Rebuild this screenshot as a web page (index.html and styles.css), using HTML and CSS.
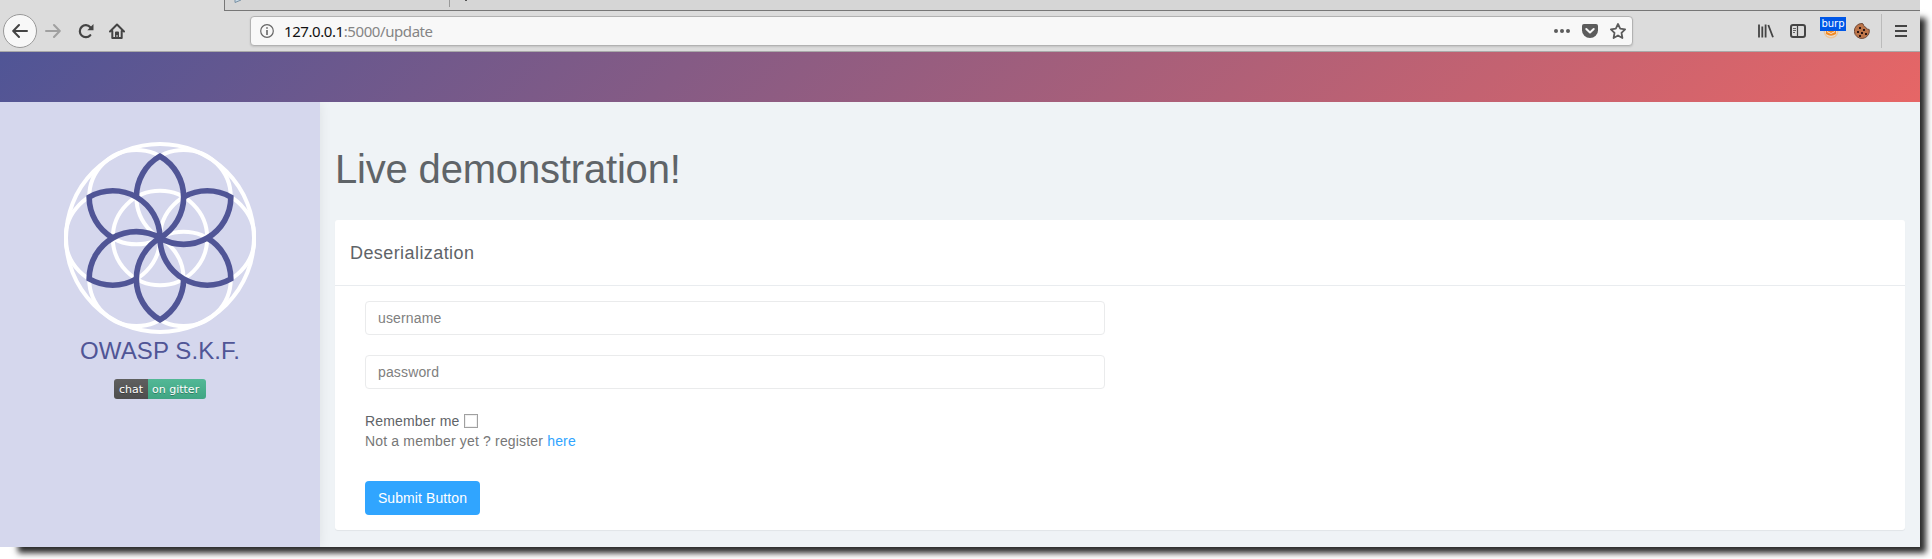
FILE: index.html
```html
<!DOCTYPE html>
<html lang="en">
<head>
<meta charset="utf-8">
<title>Live demonstration</title>
<link rel="stylesheet" href="styles.css">
</head>
<body>
<div class="window">
  <div class="tabstrip">
    <div class="tabs">
      <svg class="tab-icon" width="9" height="3" viewBox="0 0 9 3"><path d="M1 0v2.500L7 0" fill="#c9dbe8" stroke="#7890a3"/></svg>
      <span class="tab-sep"></span>
      <span class="tab-plus"></span>
    </div>
  </div>
  <div class="toolbar">
    <div class="nav">
      <span class="back"><svg width="16" height="16" viewBox="0 0 16 16" class="line"><path d="M15 8H1.500M7 2L1.200 8L7 14"/></svg></span>
      <svg width="16" height="16" viewBox="0 0 16 16" class="line forward"><path d="M1 8h13.500M9 2l5.800 6L9 14"/></svg>
      <svg width="16" height="16" viewBox="0 0 16 16" class="reload"><path d="M12.300 12.200A6 6 0 1 1 12.300 4.200" fill="none" stroke="#444" stroke-width="2.200" stroke-linecap="round"/><path d="M15.500 1v6.200H9.300z" fill="#444"/></svg>
      <svg width="16" height="16" viewBox="0 0 16 16" class="home"><path d="M1 8.500L8 1.500L15 8.500M3.300 8v6.900h9.400V8" fill="none" stroke="#444" stroke-width="2" stroke-linecap="round" stroke-linejoin="round"/><path d="M6 15V9.500q0-1 1-1h2q1 0 1 1V15H8.500v-3h-1v3z" fill="#444"/></svg>
    </div>
    <div class="urlbar">
      <svg width="14" height="14" viewBox="0 0 14 14"><circle cx="7" cy="7" r="6.300" fill="none" stroke="#666" stroke-width="1.200"/><path d="M6.200 6h1.600v5H6.200zM6.200 3.200h1.600v1.600H6.200z" fill="#666"/></svg>
      <span class="url"><b>127.0.0.1</b>:5000/update</span>
      <div class="page-actions">
        <svg width="16" height="16" viewBox="0 0 16 16" fill="#5c5c5c"><circle cx="2" cy="8" r="2"/><circle cx="8" cy="8" r="2"/><circle cx="14" cy="8" r="2"/></svg>
        <svg width="16" height="16" viewBox="0 0 16 16"><path d="M2 1h12q2 0 2 2v4.500a8 7.500 0 0 1-16 0V3q0-2 2-2z" fill="#5c5c5c"/><path d="M4.300 6L8 9.500L11.700 6" fill="none" stroke="#f8f8f8" stroke-width="2" stroke-linecap="round" stroke-linejoin="round"/></svg>
        <svg width="16" height="16" viewBox="0 0 16 16"><path d="M8 1l2.200 4.600 4.900.7-3.600 3.500.9 5.200L8 12.500 3.600 15l.9-5.200L.9 6.300l4.900-.7z" fill="none" stroke="#5c5c5c" stroke-width="1.800" stroke-linejoin="round"/></svg>
      </div>
    </div>
    <div class="tools">
      <svg width="16" height="16" viewBox="0 0 16 16" class="library"><path d="M1 1.500v13M4.300 3.500v11M7.600 1.500v13M10.300 2L15 14.300" fill="none" stroke="#444" stroke-width="1.800"/></svg>
      <svg width="16" height="16" viewBox="0 0 16 16" class="sidebar-icon"><rect x="1" y="2" width="14" height="12" rx="2" fill="none" stroke="#444" stroke-width="2"/><path d="M7.500 2v12" stroke="#444" stroke-width="1.200"/><path d="M3 5.500h3M3 7.500h3M3 9.500h2" stroke="#555" stroke-width=".9"/></svg>
      <span class="burp"><svg width="16" height="16" viewBox="0 0 16 16"><circle cx="8" cy="8" r="7.500" fill="#eec79b"/><circle cx="8" cy="8" r="6" fill="#e8e1da"/><path d="M3 8h10v3q-5 3.500-10 0z" fill="#f28a24"/><path d="M4 8.500l4 2 4-2" fill="none" stroke="#f6e6d4"/></svg><span class="burp-label">burp</span></span>
      <svg width="16" height="16" viewBox="0 0 16 16" class="cookie"><path d="M8 .5q1.300 0 1.500 1.700Q10 4 11.500 4q.5 2.500 3.700 2.500A7.500 7.500 0 1 1 8 .5z" fill="#bd7549" stroke="#714a38"/><path d="M5 4h2v2H5zM9 6h2v2H9zM3 8h2v2H3zM7 9h2v2H7zM11 10h2v2h-2zM5 12h2v2H5z" fill="#2e1714"/></svg>
      <span class="tool-sep"></span>
      <svg width="12" height="12" viewBox="0 0 12 12" class="menu"><path d="M0 1h12M0 6h12M0 11h12" stroke="#444" stroke-width="2"/></svg>
    </div>
  </div>
  <div class="banner"></div>
  <div class="page">
    <aside class="sidebar">
      <svg class="logo" width="192" height="192" viewBox="-96 -96 192 192" fill="none">
        <g stroke="#fff" stroke-width="4">
          <circle r="94"/><circle r="47.200"/>
          <circle cx="47.200" r="47.200"/><circle cx="-47.200" r="47.200"/>
          <circle cx="23.600" cy="-40.900" r="47.200"/><circle cx="-23.600" cy="-40.900" r="47.200"/>
          <circle cx="23.600" cy="40.900" r="47.200"/><circle cx="-23.600" cy="40.900" r="47.200"/>
        </g>
        <g class="petals">
          <path d="M-23.600 -40.900A47.200 47.200 0 0 1 0 -81.800A47.200 47.200 0 0 1 0 0"/>
          <path transform="rotate(60)" d="M-23.600 -40.900A47.200 47.200 0 0 1 0 -81.800A47.200 47.200 0 0 1 0 0"/>
          <path transform="rotate(120)" d="M-23.600 -40.900A47.200 47.200 0 0 1 0 -81.800A47.200 47.200 0 0 1 0 0"/>
          <path transform="rotate(180)" d="M-23.600 -40.900A47.200 47.200 0 0 1 0 -81.800A47.200 47.200 0 0 1 0 0"/>
          <path transform="rotate(240)" d="M-23.600 -40.900A47.200 47.200 0 0 1 0 -81.800A47.200 47.200 0 0 1 0 0"/>
          <path transform="rotate(300)" d="M-23.600 -40.900A47.200 47.200 0 0 1 0 -81.800A47.200 47.200 0 0 1 0 0"/>
        </g>
      </svg>
      <div class="brand">OWASP S.K.F.</div>
      <div class="badge"><span class="badge-left">chat</span><span class="badge-right">on gitter</span></div>
    </aside>
    <main class="content">
      <h1>Live demonstration!</h1>
      <section class="card">
        <h2>Deserialization</h2>
        <form class="form">
          <input class="field" type="text" placeholder="username">
          <input class="field" type="text" placeholder="password">
          <div class="remember">Remember me <span class="check"></span></div>
          <div class="register">Not a member yet ? register <a>here</a></div>
          <button class="submit" type="button">Submit Button</button>
        </form>
      </section>
    </main>
  </div>
</div>
</body>
</html>
```
FILE: styles.css
```css
* { box-sizing: border-box; }
html { background: #fff; }
body { margin: 0; height: 559px; overflow: hidden; font-family: "Liberation Sans", Arial, sans-serif; font-size: 14px; color: #5f6468; }
svg { display: block; flex: none; }
.window { width: 1920px; height: 547px; box-shadow: 12px 12px 6px -6px #2c2c2c; display: flex; flex-direction: column; }
.tabstrip { height: 11px; background: #dcdcdc; padding-left: 224px; flex: none; }
.tabs { height: 11px; background: #d6d6d6; border-left: 1px solid #777; border-bottom: 1px solid #777; display: flex; align-items: flex-start; }
.tab-icon { margin-left: 9px; }
.tab-sep { width: 1px; height: 7px; background: #999; margin-left: 206px; }
.tab-plus { width: 2px; height: 1px; background: #555; margin-left: 15px; }
.toolbar { height: 41px; flex: none; background: #dcdcdc; border-bottom: 1px solid #a9a9a9; display: flex; align-items: center; }
.nav { display: flex; align-items: center; width: 250px; padding-left: 3px; }
.back { width: 34px; height: 34px; border: 1px solid #999; border-radius: 50%; background: #f8f8f8; display: flex; align-items: center; justify-content: center; }
.line { fill: none; stroke: #444; stroke-width: 2; stroke-linecap: round; stroke-linejoin: round; }
.forward { stroke: #a0a0a0; margin-left: 8px; }
.reload { margin-left: 17px; }
.home { margin-left: 15px; }
.urlbar { width: 1383px; height: 30px; background: #f8f8f8; border: 1px solid #b2b2b2; border-radius: 4px; box-shadow: 0 1px 2px rgba(0,0,0,.12); display: flex; align-items: center; padding: 0 6px 0 9px; }
.url { font: 15px/20px "Noto Sans", sans-serif; letter-spacing: -.42px; color: #858585; margin-left: 10px; }
.url b { font-weight: 400; color: #111; }
.page-actions { margin-left: auto; display: flex; gap: 12px; }
.tools { flex: 1; display: flex; align-items: center; padding-left: 125px; height: 40px; }
.sidebar-icon { margin-left: 16px; }
.burp { position: relative; margin-left: 17px; }
.burp-label { position: absolute; left: -3px; top: -6px; width: 26px; height: 14px; background: #0057e7; color: #fff; font: 10px/13px "DejaVu Sans", sans-serif; text-align: center; }
.cookie { margin-left: 15px; }
.tool-sep { width: 1px; height: 34px; background: #bbb; margin-left: 11px; }
.menu { margin-left: 13px; }
.banner { height: 50px; flex: none; background: linear-gradient(135deg, #505596, #e66666); }
.page { flex: 1; display: flex; background: #eff3f6; }
.sidebar { width: 320px; background: #d5d7ed; box-shadow: 0 0 12px rgba(0,0,0,.08); clip-path: inset(0 -15px 0 0); padding-top: 40px; display: flex; flex-direction: column; align-items: center; }
.petals { stroke: #505596; stroke-width: 5.600; stroke-linejoin: miter; }
.brand { font-size: 24px; line-height: 28px; margin-top: 3px; color: #505596; letter-spacing: .1px; }
.badge { display: flex; margin-top: 14px; height: 20px; border-radius: 3px; overflow: hidden; font: 11px/21px "DejaVu Sans", sans-serif; color: #fff; text-shadow: 0 1px 0 rgba(1,1,1,.3); white-space: nowrap; }
.badge-left { width: 34px; background: linear-gradient(#5f5f5f, #4e4e4e); text-align: center; }
.badge-right { width: 58px; background: linear-gradient(#52b896, #40a583); padding-left: 4px; }
.content { flex: 1; padding: 43px 15px 0; }
h1 { font-size: 40px; line-height: 48px; font-weight: 400; margin: 0 0 27px; letter-spacing: -.18px; }
.card { height: 310px; background: #fff; border-radius: 3px; box-shadow: 0 1px 1px rgba(0,0,0,.06); }
h2 { height: 66px; margin: 0; padding-left: 15px; border-bottom: 1px solid #e9ecef; font-size: 18px; line-height: 66px; font-weight: 400; letter-spacing: .42px; }
.form { padding: 15px 30px; display: flex; flex-direction: column; align-items: flex-start; letter-spacing: .17px; }
.field { width: 740px; height: 34px; border: 1px solid #eaebec; border-radius: 4px; padding: 0 12px; font: 14px "Liberation Sans", Arial, sans-serif; letter-spacing: .15px; background: #fff; margin-bottom: 20px; }
.field::placeholder { color: #808080; opacity: 1; }
.remember { display: flex; align-items: center; gap: 5px; height: 20px; margin-top: 2px; }
.check { width: 14px; height: 14px; border: 1px solid #a0a0a0; box-shadow: inset 0 0 0 1px #f0f0f0; }
.register { line-height: 20px; color: #777; }
.register a { color: #30a5ff; }
.submit { width: 115px; height: 34px; margin-top: 30px; border: 0; border-radius: 4px; background: #30a5ff; color: #fff; font: 14px "Liberation Sans", Arial, sans-serif; letter-spacing: .1px; padding: 0; }
```
